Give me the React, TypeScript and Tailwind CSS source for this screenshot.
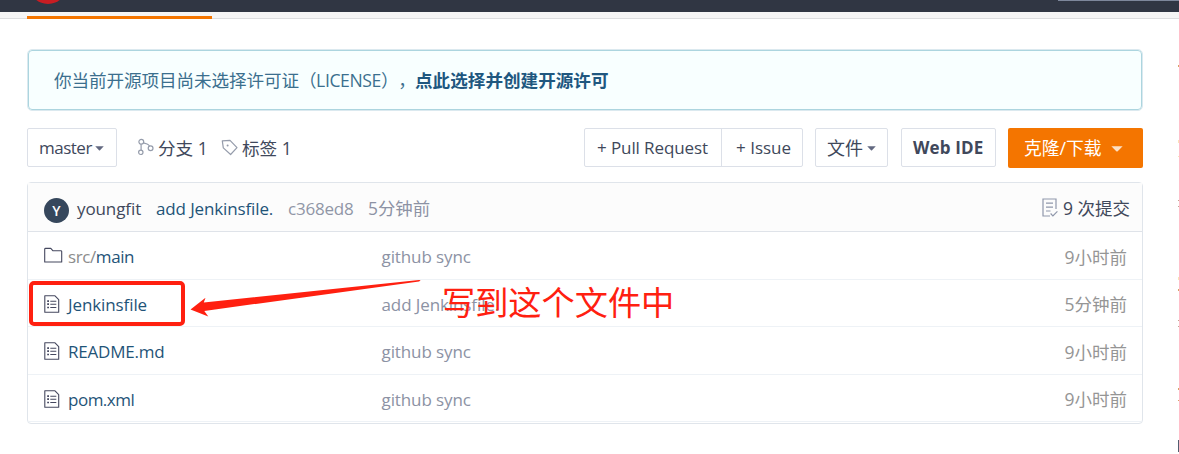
import React from "react";

function Caret({ className }: { className: string }) {
  return (
    <svg className={className} viewBox="0 0 10 6" preserveAspectRatio="none" fill="currentColor">
      <path d="M0.3 0.3h9.4L5.6 5.2q-.6.6-1.2 0z" />
    </svg>
  );
}

function FileIcon() {
  return (
    <svg className="h-[18px] w-4 shrink-0 text-[#45485f]" viewBox="0 0 16 18" fill="none" stroke="currentColor" strokeWidth="1.1">
      <path d="M.8.8h10.2l3.7 3.9v12.5H.8z" strokeLinejoin="round" />
      <path d="M6.3 6.2h6M6.3 9.2h6M6.3 12.5h6" />
      <path d="M3.2 6.2h1.8M3.2 9.2h1.8M3.2 12.5h1.8" strokeWidth="1.7" />
    </svg>
  );
}

function FolderIcon() {
  return (
    <svg className="h-[18px] w-[19px] shrink-0 text-[#45485f]" viewBox="0 0 19 18" fill="none" stroke="currentColor" strokeWidth="1.1">
      <path d="M.7 15V2.3q0-.9.9-.9h5.2l2 2.3h8q.9 0 .9.9V15z" strokeLinejoin="round" />
    </svg>
  );
}

type Row = {
  id: string;
  height: string;
  name: React.ReactNode;
  tracking: string;
  message: string;
  time: string;
  folder?: boolean;
};

const rows: Row[] = [
  { id: "src", height: "h-12", name: <><span className="text-[#8c8c8c]">src/</span>main</>, tracking: "tracking-[-0.4px]", message: "github sync", time: "9小时前", folder: true },
  { id: "jenkins", height: "h-[47px]", name: "Jenkinsfile", tracking: "tracking-[-0.1px]", message: "add Jenkinsfile.", time: "5分钟前" },
  { id: "readme", height: "h-12", name: "README.md", tracking: "tracking-[-0.2px]", message: "github sync", time: "9小时前" },
  { id: "pom", height: "h-[47px]", name: "pom.xml", tracking: "tracking-[-0.5px]", message: "github sync", time: "9小时前" },
];

function TopBar() {
  return (
    <header>
      <div className="flex h-3 justify-between overflow-hidden bg-[#303643]">
        <svg className="ml-8 h-3 w-8" viewBox="0 0 32 12">
          <circle cx="16" cy="-15" r="19" fill="#c71d23" />
        </svg>
        <div className="h-px w-[121px] bg-[#7d879b]" />
      </div>
      <div className="flex h-[7px] items-end border-b border-[#dcdddf] bg-[#f5f5f5] pl-[27px]">
        <div className="-mb-px h-[3px] w-[185px] bg-[#f47500]" />
      </div>
    </header>
  );
}

function Toolbar() {
  return (
    <div className="mt-[17px] flex h-10 items-start text-[17px] text-[#40485b]">
      <button className="flex h-[39px] w-[90px] items-center rounded-[2px] border border-[#dce0e8] pl-[11px]">
        <span className="w-[56px] pt-px text-left tracking-[-0.5px] whitespace-nowrap">master</span>
        <Caret className="mt-px h-[5px] w-[9px] text-[#626880]" />
      </button>
      <div className="flex h-[39px] items-center pl-5">
        <svg className="mb-px h-[18px] w-[18px] text-[#959cab]" viewBox="0 0 18 18" fill="none" stroke="currentColor" strokeWidth="1.2">
          <circle cx="4.3" cy="3.8" r="2.4" />
          <circle cx="3.8" cy="14.3" r="2.2" />
          <circle cx="13.6" cy="10.2" r="2.4" />
          <path d="M4.1 6.2v5.9M6.4 4.9 10.1 6q1.6.6 2.4 2" />
        </svg>
        <span className="ml-[3px] w-[63px] pt-px text-[17.6px] whitespace-nowrap">分支 1</span>
        <svg className="mb-px h-[17px] w-[18px] text-[#959cab]" viewBox="0 0 18 17" fill="none" stroke="currentColor" strokeWidth="1.2">
          <path d="M1.3 1.8 9 1.4l7 7.3-6.4 6.8-7.3-6.6z" strokeLinejoin="round" />
          <circle cx="6.6" cy="6.5" r="1" fill="currentColor" stroke="none" />
        </svg>
        <span className="ml-[3px] pt-px text-[17.6px] whitespace-nowrap">标签 1</span>
      </div>
      <div className="ml-auto flex items-start">
        <div className="flex h-[39px] w-[219px] rounded-[2px] border border-[#dce0e8]">
          <button className="w-[137px] border-r border-[#dce0e8] pt-px pl-3 text-left tracking-[-0.1px] whitespace-nowrap">+ Pull Request</button>
          <button className="pt-px pl-[14px] text-left tracking-[0px] whitespace-nowrap">+ Issue</button>
        </div>
        <button className="ml-3 flex h-[39px] w-[73px] items-center rounded-[2px] border border-[#dce0e8] pl-[11px]">
          <span className="w-10 pt-px text-left text-[18px] whitespace-nowrap">文件</span>
          <Caret className="mt-px h-[5px] w-[9px] text-[#626880]" />
        </button>
        <button className="ml-[13px] h-[39px] w-[95px] rounded-[2px] border border-[#dce0e8] pt-px pl-[11px] text-left font-bold tracking-[0.15px] whitespace-nowrap">Web IDE</button>
        <button className="ml-3 flex h-10 w-[135px] items-center rounded-[2px] bg-[#f47500] pl-4 text-white">
          <span className="w-[87px] pt-px text-left text-[17.8px] whitespace-nowrap">克隆/下载</span>
          <Caret className="mt-px h-[6px] w-3 text-[#fde0c4]" />
        </button>
      </div>
    </div>
  );
}

function Annotation() {
  return (
    <>
      <div className="absolute top-[281px] left-[29px] h-[45px] w-[156px] rounded-[5px] border-4 border-[#ff2010]" />
      <svg className="absolute top-[276px] left-[188px] h-[44px] w-[236px]" viewBox="188 276 236 44" fill="#ff2010">
        <path d="M190.5 309.5 205.5 297.8 203.8 302.4 419 279.9q3 0 0 1.5L204.3 311l4 5.5z" />
      </svg>
      <div className="absolute top-[279px] left-[442px] text-[33.2px] leading-[48px] whitespace-nowrap text-[#ff2010]">写到这个文件中</div>
    </>
  );
}

function SidebarEdge() {
  return (
    <svg className="absolute top-0 right-0 h-[454px] w-px" viewBox="0 0 1 454" strokeWidth="1" fill="none">
      <path d="M.5 65v2M.5 289v2M.5 388v2M.5 400v1" stroke="#d9a066" />
      <path d="M.5 140v3M.5 156v1M.5 277v3" stroke="#fbe3b8" />
      <path d="M.5 200v1M.5 206v1M.5 320v1M.5 326v1" stroke="#c4a191" />
      <path d="M.5 440v12" stroke="#525d70" />
    </svg>
  );
}

export default function App() {
  return (
    <div className="relative h-[454px] w-[1179px] overflow-hidden bg-white font-['Open_Sans','Noto_Sans_CJK_SC',sans-serif] [text-spacing-trim:space-all]">
      <TopBar />
      <main className="ml-[27px] w-[1116px] pt-[30px]">
        <div className="rounded-[5px] border border-[#dbe9ef]">
          <div className="flex h-[60px] items-center rounded-[4px] border border-[#acd5df] bg-[#f8ffff] pl-[25px] text-[17.6px] whitespace-nowrap text-[#3b6f8e]">
            <span className="w-[361px] tracking-[-0.1px]">你当前开源项目尚未选择许可证<span className="tracking-[-0.4px]">（LICENSE），</span></span>
            <span className="font-bold text-[#20577f]">点此选择并创建开源许可</span>
          </div>
        </div>
        <Toolbar />
        <div className="mt-[14px] h-[242px] rounded-[4px] border border-[#e0e5eb] text-[17px]">
          <div className="flex h-[49px] items-center border-b border-[#dfe3e9] bg-[#fcfcfc] pt-[3px] pr-[12px] pl-4 whitespace-nowrap">
            <div className="mt-[3px] flex size-[25px] items-center justify-center rounded-full bg-[#36475c] text-[14px] font-semibold text-white">Y</div>
            <span className="ml-2 w-[79px] tracking-[-0.1px] text-[#40485b]">youngfit</span>
            <span className="w-[132px] tracking-[-0.13px] text-[#1f5478]">add Jenkinsfile.</span>
            <span className="w-20 tracking-[-0.2px] text-[#9096a6]">c368ed8</span>
            <span className="text-[17.4px] text-[#8c92a4]">5分钟前</span>
            <div className="ml-auto flex items-center">
              <svg className="mr-[5px] mb-[3px] h-[19px] w-4 text-[#8f97ab]" viewBox="0 0 16 19" fill="none" stroke="currentColor" strokeWidth="1.2">
                <path d="M14 11V1H1v17h7M4 5.2h7M4 9.2h7M4 13h4.5M8.6 15.5l2.3 2.4 4.5-4.5" />
              </svg>
              <span className="text-[17.5px] text-[#40485b]">9 次提交</span>
            </div>
          </div>
          {rows.map((r) => (
            <div key={r.id} className={`flex ${r.height} items-center border-b border-[#eef2f6] pt-[3px] pr-[15px] pl-4 whitespace-nowrap`}>
              <div className="flex w-6 pb-[2px]">{r.folder ? <FolderIcon /> : <FileIcon />}</div>
              <span className={`w-[313.5px] text-[#1f5478] ${r.tracking}`}>{r.name}</span>
              <span className="tracking-[-0.1px] text-[#8c92a4]">{r.message}</span>
              <span className="ml-auto text-[17.5px] text-[#959595]">{r.time}</span>
            </div>
          ))}
        </div>
      </main>
      <Annotation />
      <SidebarEdge />
    </div>
  );
}
